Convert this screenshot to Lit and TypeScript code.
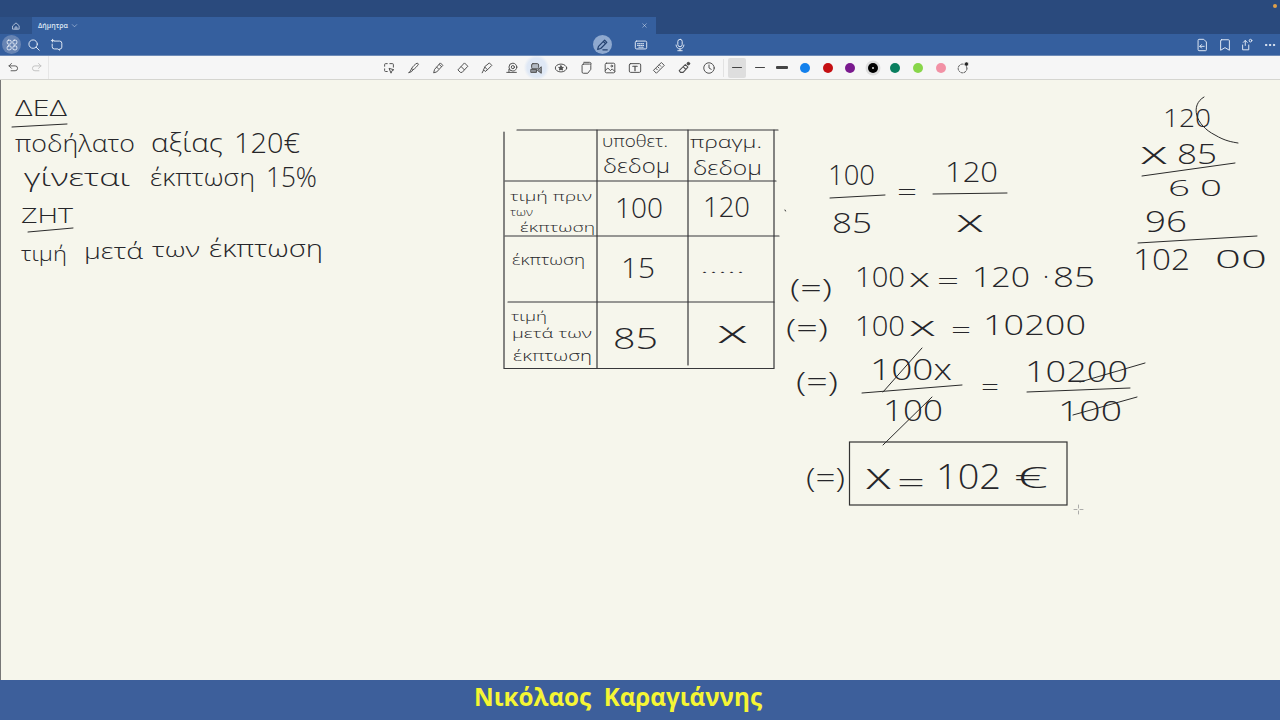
import { LitElement, html, css, svg } from "lit";
import { customElement } from "lit/decorators.js";

type Ink = [string, number, number, number, number];
// text, x, baseline, font-size, width on the page
const INK: Ink[] = [
  ["ΔΕΔ", 15, 116, 22, 52],
  ["ποδήλατο", 15, 152, 24, 120],
  ["αξίας", 151, 152, 26, 72],
  ["120€", 234, 153, 28, 66],
  ["γίνεται", 24, 186, 24, 106],
  ["έκπτωση", 150, 186, 24, 105],
  ["15%", 266, 187, 27, 51],
  ["ΖΗΤ", 21, 223, 20, 52],
  ["τιμή", 21, 261, 21, 46],
  ["μετά", 84, 259, 22, 59],
  ["των", 152, 257, 21, 48],
  ["έκπτωση", 209, 257, 24, 114],
  ["υποθετ.", 602, 147, 16, 66],
  ["δεδομ", 603, 173, 20, 67],
  ["πραγμ.", 690, 148, 17, 72],
  ["δεδομ", 693, 175, 20, 69],
  ["τιμή πριν", 510, 201, 13, 82],
  ["των", 510, 216, 10.5, 23],
  ["έκπτωση", 520, 232, 12, 75],
  ["100", 615, 218, 28, 48],
  ["120", 703, 217, 28, 47],
  ["έκπτωση", 512, 265, 15, 73],
  ["15", 621, 278, 28, 34],
  [".....", 700, 273, 13, 45],
  ["τιμή", 511, 321, 13, 36],
  ["μετά των", 512, 338, 12.5, 80],
  ["έκπτωση", 513, 361, 14, 79],
  ["85", 613, 349, 30, 45],
  ["x", 717, 343, 32, 31],
  ["100", 828, 185, 27, 47],
  ["=", 897, 201, 24, 20],
  ["120", 945, 182, 28, 53],
  ["85", 832, 233, 28, 40],
  ["x", 956, 232, 32, 28],
  ["(=)", 790, 297, 26, 42],
  ["100", 855, 287, 28, 50],
  ["x", 909, 287, 26, 21],
  ["=", 937, 290, 24, 22],
  ["120", 972, 287, 28, 58],
  ["·", 1043, 285, 26, 6],
  ["85", 1053, 287, 28, 42],
  ["(=)", 786, 337, 26, 42],
  ["100", 855, 336, 28, 50],
  ["x", 909, 336, 28, 27],
  ["=", 951, 339, 24, 20],
  ["10200", 983, 335, 28, 103],
  ["(=)", 796, 392, 27, 42],
  ["100x", 870, 380, 30, 82],
  ["100", 883, 421, 30, 60],
  ["=", 981, 396, 24, 18],
  ["10200", 1025, 382, 30, 103],
  ["100", 1058, 421, 28, 64],
  ["(=)", 806, 488, 27, 39],
  ["x", 865, 489, 36, 27],
  ["=", 897, 493, 32, 28],
  ["102", 936, 489, 34, 65],
  ["€", 1014, 488, 30, 34],
  ["120", 1163, 127, 26, 48],
  ["x", 1140, 164, 32, 28],
  ["85", 1177, 163.500, 27, 40],
  ["6 0", 1168, 195.500, 22, 54],
  ["96", 1145, 232, 29, 42],
  ["102", 1133, 270, 29, 57],
  ["00", 1215, 268, 26, 52],
];

// ruled lines, underlines and cancelling strokes: x1 y1 x2 y2
const STROKES: number[][] = [
  [12, 127, 67, 124],
  [28, 232, 73, 228],
  [830, 198, 885, 195],
  [933, 194, 1007, 193],
  [862, 393, 962, 385],
  [1027, 392, 1130, 388],
  [922, 348, 883, 392],
  [932, 397, 883, 445],
  [1080, 382, 1145, 363],
  [1073, 415, 1137, 397],
  [1142, 176, 1235, 163],
  [1138, 243, 1257, 236],
  [785, 210, 785.5, 211],
];

const TABLE: number[][] = [
  [517, 130, 778, 130],
  [504, 132, 504, 368],
  [504, 368.5, 774, 368.5],
  [597, 130, 597, 368],
  [688, 130, 688, 365],
  [774, 130, 774, 368],
  [505, 181, 776, 181],
  [505, 236, 779, 236],
  [508, 302, 774, 302],
];

const i = (body: unknown, size = 16) => html`<svg class="ic" width=${size} height=${size} viewBox="0 0 16 16" fill="none" stroke="currentColor" stroke-width="1.1" stroke-linecap="round" stroke-linejoin="round">${body}</svg>`;

const RIBBON = [
  svg`<path d="M6 3H4a1 1 0 0 0-1 1v2M9 3h3a1 1 0 0 1 1 1v3M3 9v2a1 1 0 0 0 1 1h2"/><path d="M8.5 8.5l5 1.5-2 1-1 2.5z"/>`,
  svg`<path d="M12.5 2.5c-2 1-5 4-6 6l1.5 1.5c2-1 5-4 6-6zM6.5 8.5l-1.5 3-2 2 3.5-1.5 1.500-2"/>`,
  svg`<path d="M11 2.500l2.500 2.500-7 7.500-3.500 1 1-3.500zM9.500 4l2.500 2.500M6.500 7l2 2"/>`,
  svg`<path d="M10 2.500l3.500 3.500-6.500 7H5L2.500 10.500zM6 6.500l3.500 3.500"/>`,
  svg`<path d="M11 2.500l2.500 2.500-5 5-3-3zM5.500 7l-1.500 3 2 2 2.500-2M4 10.500l-1.500 3"/>`,
  svg`<circle cx="9" cy="7" r="4.500"/><circle cx="9" cy="7" r="1.800"/><path d="M2 13h11M4.500 9.500V13"/>`,
  svg`<rect x="3" y="3" width="8" height="6" rx="1.500" fill="currentColor" fill-opacity=".3"/><path d="M2.500 9.500h6v3.500h-6zM14 7v7l-4-3z" fill="currentColor" fill-opacity=".55"/>`,
  svg`<ellipse cx="8" cy="8" rx="6.500" ry="4.500"/><path d="M8 5.500l.8 1.700 1.900.2-1.400 1.200.4 1.800L8 9.500l-1.700.9.4-1.800-1.400-1.200 1.900-.2z" fill="currentColor"/>`,
  svg`<path d="M5 3.500h7a1.500 1.500 0 0 1 1.500 1.500v4.500L10 14H5A1.500 1.500 0 0 1 3.500 12.500V5A1.500 1.500 0 0 1 5 3.500zM5.500 1.500H12a2 2 0 0 1 2 2"/>`,
  svg`<rect x="2.500" y="2.500" width="11" height="11" rx="1.500"/><path d="M2.500 11l3-3 3 3 2-2 3 3"/><circle cx="10" cy="5.800" r="1"/>`,
  svg`<rect x="1.500" y="3" width="13" height="10" rx="1.500"/><path d="M5.500 6h5M8 6v5" stroke-width="1.400"/>`,
  svg`<path d="M11 2l3 3-9 9-3-3zM8.500 4.500l1.500 1.500M6.500 6.500l1.500 1.500M4.500 8.500l1.500 1.500"/>`,
  svg`<path d="M9.500 4l3 3-5.500 6H4L2.500 11zM7 6.500l3 3" stroke-width="1.200"/><circle cx="13" cy="3" r="1.500" fill="currentColor"/>`,
  svg`<circle cx="8" cy="8" r="6"/><path d="M8 4.500V8l2.500 1.500"/>`,
];

const WIDTHS: [number, number][] = [[10, 1], [10, 1.6], [12, 2.8]];
const COLORS: [string, boolean][] = [
  ["#1380ec", false],
  ["#c50f12", false],
  ["#7a1a8e", false],
  ["#000000", true],
  ["#0a7f5f", false],
  ["#88d64a", false],
  ["#f291a5", false],
];

@customElement("app-root")
export class AppRoot extends LitElement {
  static styles = css`
    :host {
      display: flex;
      flex-direction: column;
      width: 1280px;
      height: 720px;
      overflow: hidden;
      position: relative;
      background: #f6f6ec;
      font-family: "Open Sans", "Liberation Sans", sans-serif;
    }
    .ic { display: block; flex: none; }
    .title { height: 17px; flex: none; background: #2a4a7d; position: relative; }
    .dot { position: absolute; top: 4px; right: 3px; width: 4px; height: 4px; border-radius: 50%; background: #e0a048; }
    .tabs { height: 17px; flex: none; display: flex; background: #2a4a7d; color: #dfe8f5; }
    .home { width: 32px; display: flex; align-items: center; justify-content: center; background: #2d5188; }
    .tab { width: 624px; display: flex; align-items: center; background: #355f9e; padding: 0 8px 0 6px; box-sizing: border-box; font-size: 7px; font-weight: 600; gap: 3px; }
    .tab .grow { flex: 1; }
    .nav { height: 22px; flex: none; background: #355f9e; color: #e4ebf6; display: grid; grid-template-columns: 1fr auto 1fr; align-items: center; border-bottom: 1px solid #6d8ab6; box-sizing: border-box; }
    .group { display: flex; align-items: center; }
    .left { padding-left: 2px; gap: 3.500px; }
    .btn { width: 19px; height: 19px; display: flex; align-items: center; justify-content: center; }
    .apps { background: #6784b3; border-radius: 50%; }
    .center { gap: 20px; margin-left: 2px; }
    .pen { background: #8fa9cf; border-radius: 50%; color: #23406f; }
    .right { justify-content: flex-end; gap: 3.500px; padding-right: 1px; }
    .ribbon { height: 23px; flex: none; background: #f6f6f6; border-bottom: 1px solid #d5d5d0; box-sizing: content-box; display: flex; align-items: center; position: relative; color: #4d4d4d; }
    .undo { display: flex; gap: 10px; padding-left: 7px; width: 49px; height: 100%; box-sizing: border-box; align-items: center; border-right: 1px solid #e6e6e6; }
    .undo .off { color: #bdbdbd; }
    .tools { display: flex; align-items: center; margin-left: 327.500px; }
    .tool { width: 24.600px; height: 23px; display: flex; align-items: center; justify-content: center; }
    .tool.active { background: radial-gradient(circle, #dfe8f5 55%, transparent 75%); }
    .sep { width: 1px; height: 18px; background: #e2e2e2; margin: 0 4.500px 0 2px; }
    .w { width: 22.700px; height: 20px; display: flex; align-items: center; justify-content: center; }
    .w.on { width: 18px; margin-right: 2px; background: #dedede; border-radius: 2px; }
    .w span { display: block; background: #444; border-radius: 1px; }
    .swatch { width: 22.600px; height: 23px; display: flex; align-items: center; justify-content: center; }
    .swatch span { display: block; width: 10px; height: 10px; border-radius: 50%; }
    .swatch.on span { box-shadow: 0 0 0 2.500px #dedede; display: flex; align-items: center; justify-content: center; }
    .swatch.on span::after { content: ""; width: 2px; height: 2px; border-radius: 50%; background: #ddd; }
    .canvas { flex: 1; min-height: 0; position: relative; border-left: 1px solid #777; }
    .ink { position: absolute; left: -1px; top: 0; width: 1280px; height: 600px; }
    .ink text { font-family: "Open Sans", "Noto Sans", sans-serif; font-weight: 300; fill: #26262a; }
    .ink line, .ink path { stroke: #2b2b2b; fill: none; stroke-linecap: round; }
    .ink .thin { stroke-width: 1; }
    .ink .grid { stroke: #37373a; stroke-width: 1.200; }
    .ink rect { fill: none; stroke: #333; stroke-width: 1.200; }
    .ink .cursor { stroke: #999; stroke-width: .8; }
    .footer { height: 40px; flex: none; background: #3d5f9b; display: flex; align-items: center; justify-content: center; padding: 0 44px 6px 0; box-sizing: border-box; }
    .name { font-family: "Open Sans", "Liberation Sans", sans-serif; font-weight: 700; font-size: 24.200px; line-height: 30px; color: #f5f534; white-space: pre; }
  `;

  render() {
    return html`
      <div class="title"><span class="dot"></span></div>
      <div class="tabs">
        <div class="home">${i(svg`<path d="M3 7.500L8 3l5 4.500V13H3zM6.500 13V9.500h3V13"/>`, 10)}</div>
        <div class="tab">
          <span>Δήμητρα</span>
          ${i(svg`<path d="M3 6l5 5 5-5"/>`, 7)}
          <span class="grow"></span>
          ${i(svg`<path d="M4 4l8 8M12 4l-8 8"/>`, 7)}
        </div>
      </div>
      <div class="nav">
        <div class="group left">
          <div class="btn apps">${i(svg`<rect x="2.500" y="2.500" width="4.500" height="4.500" rx="1.500"/><rect x="9" y="2.500" width="4.500" height="4.500" rx="1.500"/><rect x="2.500" y="9" width="4.500" height="4.500" rx="1.500"/><rect x="9" y="9" width="4.500" height="4.500" rx="1.500"/>`, 14)}</div>
          <div class="btn">${i(svg`<circle cx="7" cy="7" r="4.800"/><path d="M10.500 10.500l3.500 3.500"/>`, 14)}</div>
          <div class="btn">${i(svg`<path d="M5 3.500h6a2.500 2.500 0 0 1 2.500 2.500v4.500a2 2 0 0 1-2 2H11v1.500l-2-1.500H5a2.500 2.500 0 0 1-2.500-2.500V7"/><path d="M3 1.500v3M1.500 3h3"/>`, 14)}</div>
        </div>
        <div class="group center">
          <div class="btn pen">${i(svg`<path d="M11 2.500l2.500 2.500-7 7-3.500 1 1-3.500zM9.500 4l2.500 2.500M9 13.500h5" stroke-width="1.400"/>`, 14)}</div>
          <div class="btn">${i(svg`<rect x="1.500" y="3.500" width="13" height="9" rx="1.500"/><path d="M4 6.500h8M4 8.500h8M5.500 10.500h5" stroke-dasharray="1 1"/>`, 14)}</div>
          <div class="btn">${i(svg`<rect x="5.500" y="1.500" width="5" height="8.500" rx="2.500"/><path d="M3.500 8a4.500 4.500 0 0 0 9 0M8 12.500v2M5.500 14.500h5"/>`, 14)}</div>
        </div>
        <div class="group right">
          <div class="btn">${i(svg`<path d="M3.500 2.500A1 1 0 0 1 4.500 1.500H10l3 3v9a1 1 0 0 1-1 1H4.500a1 1 0 0 1-1-1zM10.500 9.500h-5M7.500 7.500l-2 2 2 2"/>`, 14)}</div>
          <div class="btn">${i(svg`<path d="M4 2h8a1 1 0 0 1 1 1v11l-5-3-5 3V3a1 1 0 0 1 1-1z"/>`, 14)}</div>
          <div class="btn">${i(svg`<path d="M6 8.500V3M3.800 5L6 2.800 8.200 5M3 8v5.500h7V8"/><circle cx="12" cy="3" r="1.500"/>`, 14)}</div>
          <div class="btn">${i(svg`<circle cx="3.500" cy="8" r=".8" fill="currentColor"/><circle cx="8" cy="8" r=".8" fill="currentColor"/><circle cx="12.500" cy="8" r=".8" fill="currentColor"/>`, 14)}</div>
        </div>
      </div>
      <div class="ribbon">
        <div class="undo">
          ${i(svg`<path d="M5.500 3L2.500 6l3 3M2.500 6H10a3 3 0 0 1 0 6H5"/>`, 13)}
          <span class="off">${i(svg`<path d="M10.500 3l3 3-3 3M13.500 6H6a3 3 0 0 0 0 6h5"/>`, 13)}</span>
        </div>
        <div class="tools">
          ${RIBBON.map((b, n) => html`<div class="tool ${n === 6 ? "active" : ""}">${i(b, 14)}</div>`)}
          <div class="sep"></div>
          ${WIDTHS.map(([w, h], n) => html`<div class="w ${n === 0 ? "on" : ""}"><span style="width:${w}px;height:${h}px"></span></div>`)}
          ${COLORS.map(([c, on]) => html`<div class="swatch ${on ? "on" : ""}"><span style="background:${c}"></span></div>`)}
          <div class="swatch">${i(svg`<circle cx="7.500" cy="8.500" r="5" stroke-dasharray="2 1.500"/><circle cx="12" cy="3.500" r="2.400" fill="#222" stroke="#f6f6f6" stroke-width=".6"/>`, 14)}</div>
        </div>
      </div>
      <div class="canvas">
        <svg class="ink" viewBox="0 80 1280 600">
          ${TABLE.map(([a, b, c, d]) => svg`<line class="grid" x1=${a} y1=${b} x2=${c} y2=${d}></line>`)}
          <rect x="849.500" y="442" width="217.500" height="63"></rect>
          ${STROKES.map(([a, b, c, d]) => svg`<line class="thin" x1=${a} y1=${b} x2=${c} y2=${d}></line>`)}
          <path class="thin" d="M1204 97C1190 105 1195 125 1215 135C1225 141 1232 142 1238 143"></path>
          ${INK.map(([t, x, y, s, w]) => svg`<text x=${x} y=${y} font-size=${s} textLength=${w} lengthAdjust="spacingAndGlyphs">${t}</text>`)}
          <path class="cursor" d="M1078.500 505v3M1078.500 511v3M1074 509.500h3M1080 509.500h3"></path>
        </svg>
      </div>
      <div class="footer"><span class="name">Νικόλαος  Καραγιάννης</span></div>
    `;
  }
}
